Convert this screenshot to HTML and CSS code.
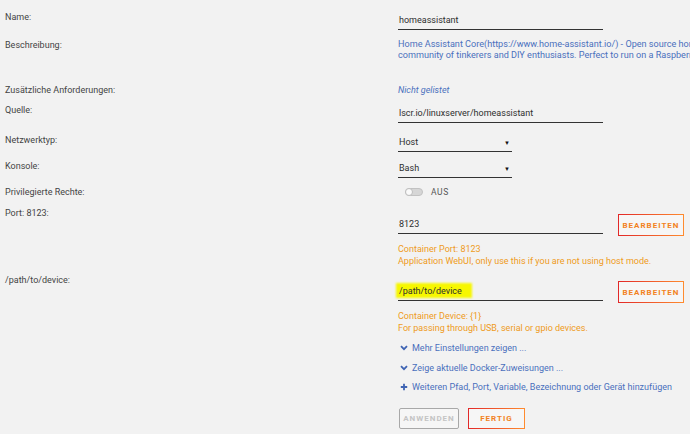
FILE: index.html
```html
<!DOCTYPE html>
<html lang="de">
<head>
<meta charset="utf-8">
<title>Container bearbeiten</title>
<link rel="stylesheet" href="styles.css">
</head>
<body>
<form class="form">
  <div class="row row-name">
    <div class="label">Name:</div>
    <div class="field"><div class="input wide">homeassistant</div></div>
  </div>
  <div class="row row-desc">
    <div class="label">Beschreibung:</div>
    <div class="field desc">Home Assistant Core(https://www.home-assistant.io/) - Open source home automation that puts local control and privacy first. Powered by a worldwide<br>community of tinkerers and DIY enthusiasts. Perfect to run on a Raspberry Pi or a local server.</div>
  </div>
  <div class="row row-req">
    <div class="label">Zusätzliche Anforderungen:</div>
    <div class="field"><span class="muted-link">Nicht gelistet</span></div>
  </div>
  <div class="row row-src">
    <div class="label">Quelle:</div>
    <div class="field"><div class="input wide">lscr.io/linuxserver/homeassistant</div></div>
  </div>
  <div class="row row-sel">
    <div class="label">Netzwerktyp:</div>
    <div class="field"><div class="select">Host<span class="caret">▼</span></div></div>
  </div>
  <div class="row row-sel">
    <div class="label">Konsole:</div>
    <div class="field"><div class="select">Bash<span class="caret">▼</span></div></div>
  </div>
  <div class="row row-priv">
    <div class="label">Privilegierte Rechte:</div>
    <div class="field switch-field">
      <span class="switch"><span class="knob"></span></span>
      <span class="switch-text">AUS</span>
    </div>
  </div>
  <div class="row row-port">
    <div class="label">Port: 8123:</div>
    <div class="field">
      <div class="input-line">
        <div class="input wide tall">8123</div>
        <button type="button" class="btn btn-edit">BEARBEITEN</button>
      </div>
      <div class="hint">Container Port: 8123<br>Application WebUI, only use this if you are not using host mode.</div>
    </div>
  </div>
  <div class="row row-dev">
    <div class="label">/path/to/device:</div>
    <div class="field">
      <div class="input-line">
        <div class="input wide tall"><span class="marker">/path/to/device</span></div>
        <button type="button" class="btn btn-edit">BEARBEITEN</button>
      </div>
      <div class="hint">Container Device: {1}<br>For passing through USB, serial or gpio devices.</div>
      <div class="links">
        <a class="link"><svg class="ico" viewBox="0 0 8 8"><path d="M1 2.2 L4 5.2 L7 2.2" fill="none" stroke="currentColor" stroke-width="1.8"/></svg>Mehr Einstellungen zeigen ...</a>
        <a class="link"><svg class="ico" viewBox="0 0 8 8"><path d="M1 2.2 L4 5.2 L7 2.2" fill="none" stroke="currentColor" stroke-width="1.8"/></svg>Zeige aktuelle Docker-Zuweisungen ...</a>
        <a class="link"><svg class="ico" viewBox="0 0 8 8"><path d="M4 0.8 V7.2 M0.8 4 H7.2" fill="none" stroke="currentColor" stroke-width="1.8"/></svg>Weiteren Pfad, Port, Variable, Bezeichnung oder Gerät hinzufügen</a>
      </div>
      <div class="actions">
        <button type="button" class="btn btn-disabled" disabled>ANWENDEN</button>
        <button type="button" class="btn btn-done">FERTIG</button>
      </div>
    </div>
  </div>
</form>
</body>
</html>
```

FILE: styles.css
```css
html, body {
  margin: 0;
  padding: 0;
  background: #f2f2f2;
  overflow: hidden;
}

body {
  width: 690px;
  height: 434px;
  font-family: Roboto, "Liberation Sans", sans-serif;
  font-size: 9px;
  line-height: 12px;
  color: #444;
}

.form {
  padding-top: 11px;
}

.row {
  display: grid;
  grid-template-columns: 393px 1fr;
  padding-left: 5px;
  white-space: nowrap;
}

.label {
  color: #444;
}

.field {
  min-width: 0;
}

.row-name { height: 28px; }
.row-desc { height: 45px; }
.row-req { height: 20px; }
.row-src { height: 30px; }
.row-sel { height: 26px; }
.row-priv { height: 21px; }
.row-port { height: 67px; }

.input {
  color: #2e2e2e;
  border-bottom: 1px solid #333;
  padding: 3px 0 3px 1px;
  box-sizing: border-box;
}

.input.wide { width: 205px; }
.input.tall { padding-top: 11px; }

.desc {
  color: #4a70bd;
  font-size: 9.1px;
  line-height: 11px;
  overflow: hidden;
  text-overflow: clip;
}

.muted-link {
  color: #4a70bd;
  font-style: italic;
  display: inline-block;
}

.select {
  position: relative;
  width: 114px;
  color: #2e2e2e;
  border-bottom: 1px solid #333;
  padding: 2px 0 3px 1px;
  box-sizing: border-box;
}

.caret {
  position: absolute;
  right: 2px;
  top: 3px;
  font-size: 6px;
  color: #111;
}

.switch-field {
  display: flex;
  align-items: center;
  height: 12px;
}

.switch {
  position: relative;
  margin-left: 7px;
  width: 18px;
  height: 8px;
  border-radius: 4px;
  background: #d6d6d6;
  border: 1px solid #c2c2c2;
  box-sizing: border-box;
}

.knob {
  position: absolute;
  left: -1px;
  top: -1px;
  width: 8px;
  height: 8px;
  border-radius: 50%;
  background: #fafafa;
  border: 1px solid #bdbdbd;
  box-sizing: border-box;
}

.switch-text {
  margin-left: 8px;
  font-size: 8.5px;
  letter-spacing: 0.6px;
  color: #555;
}

.input-line {
  display: flex;
  align-items: flex-start;
  gap: 15px;
}

.btn {
  font-family: Roboto, "Liberation Sans", sans-serif;
  font-weight: 700;
  font-size: 8px;
  letter-spacing: 1px;
  height: 22px;
  padding: 0;
  background: #f6f6f6;
  cursor: pointer;
  box-sizing: border-box;
  border: 1px solid transparent;
  border-radius: 2px;
}

.btn-edit,
.btn-done {
  border: 1px solid;
  border-image: linear-gradient(90deg, #e22828, #ff8c2f) 1;
  color: #f2821e;
}

.btn-edit {
  margin-top: 7px;
  width: 66px;
}

.hint {
  color: #ef9b22;
  margin-top: 7px;
}

.links {
  display: flex;
  flex-direction: column;
  gap: 7.5px;
  margin-top: 8px;
}

.link {
  display: flex;
  align-items: center;
  color: #4a70bd;
  padding-left: 2px;
}

.ico {
  width: 8px;
  height: 8px;
  margin-right: 4px;
  color: #3f64b3;
}

.actions {
  display: flex;
  gap: 9px;
  margin-top: 15px;
  margin-left: 1px;
}

.actions .btn {
  height: 21px;
}

.btn-disabled {
  width: 60px;
  border: 1px solid #a8a8a8;
  color: #c4c4c4;
  cursor: default;
}

.btn-done {
  width: 57px;
}

.marker {
  position: relative;
  z-index: 0;
}

.marker::before {
  content: "";
  position: absolute;
  left: -3px;
  right: -10px;
  top: -3px;
  bottom: -2px;
  background: #f7f700;
  filter: blur(1px);
  z-index: -1;
}
```
